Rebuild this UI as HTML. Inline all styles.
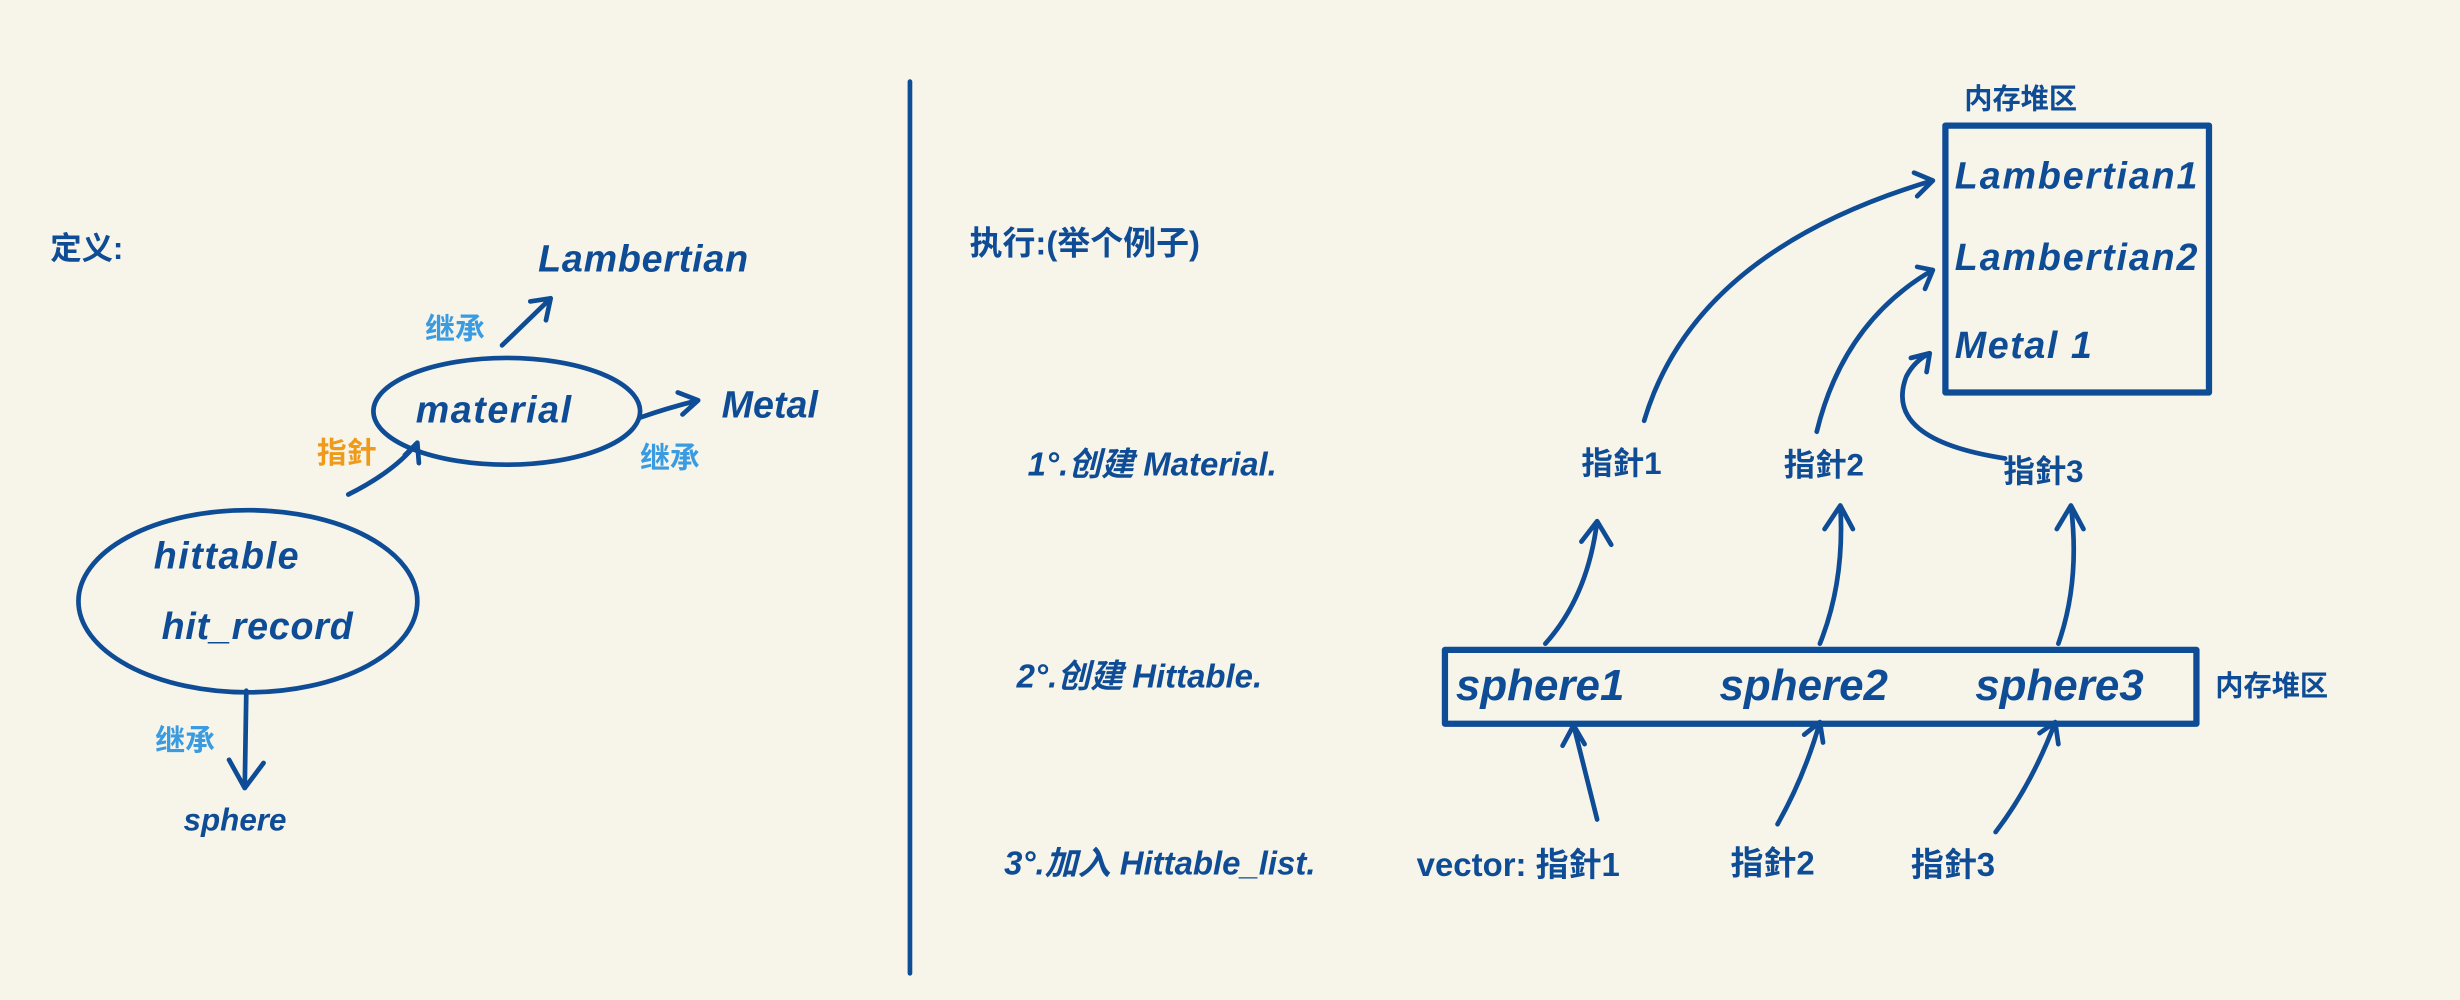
<!DOCTYPE html>
<html><head><meta charset="utf-8">
<style>
html,body{margin:0;padding:0;background:#f7f5ea;}
svg{display:block;}
text{font-family:"Liberation Sans","Noto Sans CJK SC",sans-serif;font-weight:bold;fill:#0f4c96;}
.b{fill:#3a9be0;}
.o{fill:#f09a1a;}
</style></head><body>
<svg width="2460" height="1000" viewBox="0 0 1568 637" preserveAspectRatio="none" xmlns="http://www.w3.org/2000/svg">
<rect width="1568" height="637" fill="#f7f5ea"/>
<g fill="none" stroke="#0f4c96" stroke-width="3" stroke-linecap="round" stroke-linejoin="round">
<line x1="580" y1="52" x2="580" y2="620"/>
<ellipse cx="323" cy="262" rx="85" ry="34"/>
<ellipse cx="158" cy="383" rx="108" ry="58"/>
<path d="M320 220 L351 190 M338 192 L351 190 L348 204"/>
<path d="M408 266 Q425 260 445 255 M432 250 L445 255 L435 264"/>
<path d="M222 315 Q252 300 266 282 M258 290 L266 282 L267 295"/>
<path d="M157 440 L156 502 M146 484 L156 502 L168 486"/>
<rect x="1240" y="80" width="168" height="170" stroke-width="4"/>
<rect x="921" y="414" width="479" height="47" stroke-width="4"/>
<path d="M1048 268 Q1080 160 1232 115 M1220 110 L1232 115 L1222 125"/>
<path d="M1158 275 Q1175 205 1232 172 M1222 170 L1232 172 L1227 184"/>
<path d="M1278 292 Q1200 280 1215 240 Q1220 230 1230 225 M1218 228 L1230 225 L1228 237"/>
<path d="M985 410 Q1012 380 1018 332 M1008 345 L1018 332 L1027 347"/>
<path d="M1160 410 Q1176 370 1173 322 M1163 337 L1173 322 L1181 337"/>
<path d="M1312 410 Q1326 370 1320 322 M1311 337 L1320 322 L1328 337"/>
<path d="M1018 522 Q1010 490 1003 462 M996 475 L1003 462 L1010 474"/>
<path d="M1133 525 Q1150 495 1160 460 M1150 468 L1160 460 L1162 473"/>
<path d="M1272 530 Q1295 500 1310 460 M1300 467 L1310 460 L1312 474"/>
</g>
<text x="32" y="165" font-size="20">定义:</text>
<text x="343" y="173" font-size="24" font-style="italic" letter-spacing="0.5">Lambertian</text>
<text x="265" y="269" font-size="24" font-style="italic" letter-spacing="1">material</text>
<text x="460" y="266" font-size="24" font-style="italic">Metal</text>
<text x="98" y="362" font-size="24" font-style="italic" letter-spacing="1">hittable</text>
<text x="103" y="407" font-size="24" font-style="italic" letter-spacing="0.5">hit_record</text>
<text x="117" y="529" font-size="20" font-style="italic">sphere</text>
<text class="b" x="271" y="216" font-size="19">继承</text>
<text class="b" x="408" y="298" font-size="19">继承</text>
<text class="b" x="99" y="478" font-size="19">继承</text>
<text class="o" x="202" y="295" font-size="19">指針</text>
<text x="618" y="162" font-size="21">执行:(举个例子)</text>
<text x="655" y="303" font-size="21" font-style="italic">1°.创建 Material.</text>
<text x="648" y="438" font-size="21" font-style="italic">2°.创建 Hittable.</text>
<text x="640" y="557" font-size="21" font-style="italic">3°.加入 Hittable_list.</text>
<text x="1252" y="69" font-size="18">内存堆区</text>
<text x="1246" y="120" font-size="24" font-style="italic" letter-spacing="1.2">Lambertian1</text>
<text x="1246" y="172" font-size="24" font-style="italic" letter-spacing="1.2">Lambertian2</text>
<text x="1246" y="228" font-size="24" font-style="italic" letter-spacing="1">Metal 1</text>
<text x="1008" y="302" font-size="20">指針1</text>
<text x="1137" y="303" font-size="20">指針2</text>
<text x="1277" y="307" font-size="20">指針3</text>
<text x="928" y="446" font-size="28" font-style="italic">sphere1</text>
<text x="1096" y="446" font-size="28" font-style="italic">sphere2</text>
<text x="1259" y="446" font-size="28" font-style="italic">sphere3</text>
<text x="1412" y="443" font-size="18">内存堆区</text>
<text x="903" y="558" font-size="21">vector: 指針1</text>
<text x="1103" y="557" font-size="21">指針2</text>
<text x="1218" y="558" font-size="21">指針3</text>
</svg>
</body></html>
